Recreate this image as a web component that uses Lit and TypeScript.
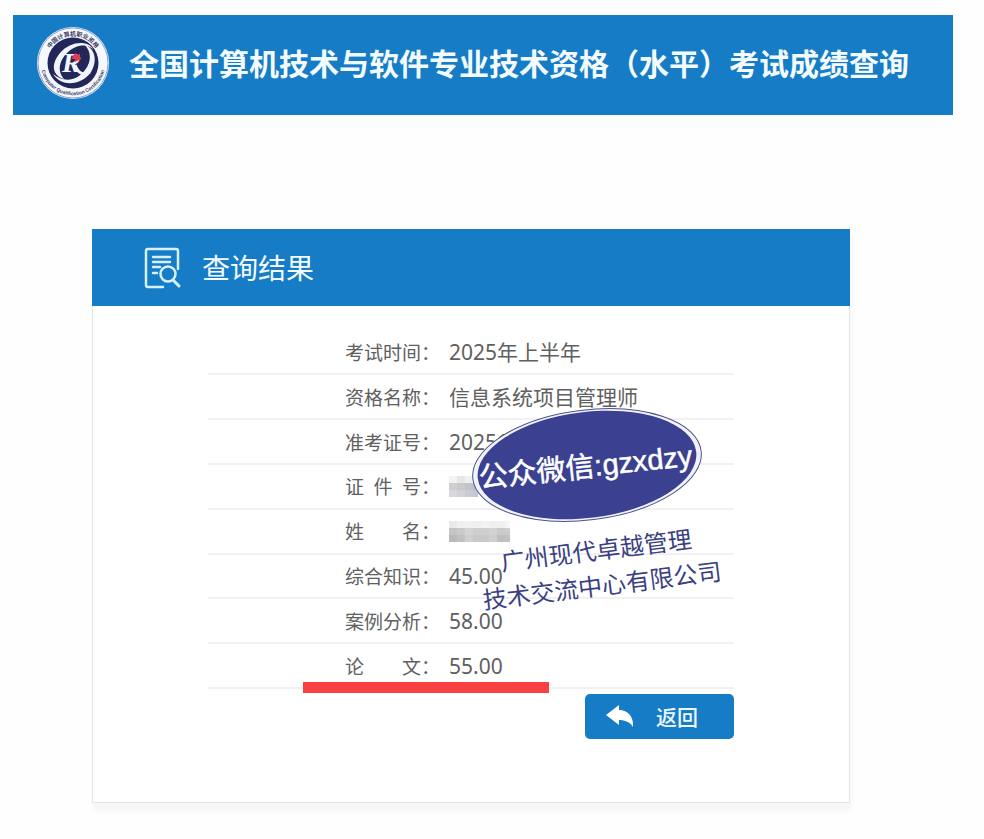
import { LitElement, html, svg, css } from "lit";
import { customElement } from "lit/decorators.js";

interface Row {
  label: string;
  value?: string;
  mosaic?: string[][];
}

const rows: Row[] = [
  { label: "考试时间", value: "2025年上半年" },
  { label: "资格名称", value: "信息系统项目管理师" },
  { label: "准考证号", value: "20251" },
  { label: "证 件 号", mosaic: [["#f3f3f3", "#e6e6e6", "#f0f0f0", "#dcdce0"], ["#cfcfcf", "#c9c9cb", "#c2c4ca", "#b9bcc8"], ["#d9d9dc", "#d2d3d9", "#c9cbd6", "#c3c6d4"]] },
  { label: "姓 名", mosaic: [["#e9e9e9", "#efefef", "#f1f1f1", "#efefef", "#f3f3f3", "#efefef", "#f0f0f0", "#f6f6f6"], ["#c4c4c4", "#cacaca", "#d4d4d4", "#cecece", "#cecece", "#d2d2d2", "#c9c9c9", "#cdcdcd"], ["#b9b9b9", "#c1c1c1", "#cfcfcf", "#c9c9c9", "#c9c9c9", "#cecece", "#bfbfbf", "#c1c1c1"]] },
  { label: "综合知识", value: "45.00" },
  { label: "案例分析", value: "58.00" },
  { label: "论 文", value: "55.00" },
];

const mosaic = (cells: string[][]) => html`
  <svg class="mosaic" width=${cells[0].length * 8 - 3} height="21" aria-label="已隐藏">
    ${cells.map((line, y) => line.map((fill, x) => svg`<rect x=${x * 8} y=${y * 7} width="8" height="7" fill=${fill}></rect>`))}
  </svg>`;

@customElement("site-logo")
export class SiteLogo extends LitElement {
  static styles = css`
    :host { display: block; flex: none; }
    svg { display: block; }
    .ring { font: 700 6px "Noto Sans CJK SC", sans-serif; fill: #3b3d63; }
    .latin { font: 700 5px "Liberation Sans", sans-serif; fill: #3b3d63; }
    .letter { font: italic 700 28px "Liberation Serif", serif; fill: #f4f5fb; }
  `;
  render() {
    return html`
      <svg width="72" height="72" viewBox="0 0 72 72" role="img" aria-label="计算机职业资格">
        <defs>
          <path id="upper" d="M9 36A27 27 0 0 1 63 36"></path>
          <path id="lower" d="M4 32A32.250 32.250 0 1 0 68 32"></path>
        </defs>
        <circle cx="36" cy="36" r="36" fill="#f5f8fe"></circle>
        <circle cx="36" cy="36" r="35" fill="none" stroke="#8fa0c4" stroke-width="1"></circle>
        <circle cx="36" cy="36" r="25.500" fill="#232659"></circle>
        <text class="ring"><textPath href="#upper" startOffset="50%" text-anchor="middle">中国计算机职业资格</textPath></text>
        <text class="latin"><textPath href="#lower" startOffset="50%" text-anchor="middle">Computer Qualification Certification</textPath></text>
        <path d="M56 22C51 13 33 14 23 26C13 38 16 49 27 52C20 44 22 34 30 26C38 18 49 16 56 22Z" fill="#f2f4fb"></path>
        <path d="M16 47C25 61 45 58 54 45C61 34 58 21 48 18C54 25 55 34 48 43C40 54 27 56 16 47Z" fill="#f2f4fb"></path>
        <text class="letter" x="25" y="45">R</text>
        <path d="M38 38C41 46 46 49 53 45" fill="none" stroke="#f2f4fb" stroke-width="3"></path>
        <path d="M35 32C35 29 37 27 39 26L39 28L43 27L43 30C45 31 44 33 42 33L38 35L38 32Z" fill="#e33a55"></path>
      </svg>`;
  }
}

@customElement("promo-stamp")
export class PromoStamp extends LitElement {
  static styles = css`
    :host { display: block; pointer-events: none; }
    svg { display: block; overflow: visible; }
    text { font-family: "Liberation Sans", "Noto Sans CJK SC", sans-serif; }
    .handle { font-size: 29px; fill: #fff; stroke: #fff; stroke-width: 0.5px; }
    .company { font-size: 24px; font-weight: 400; fill: #3b3f83; }
  `;
  render() {
    return html`
      <svg width="250" height="204" viewBox="0 0 250 204">
        <g transform="rotate(-7 115 57)">
          <ellipse cx="115" cy="57" rx="115" ry="55" fill="#f1f3fc" stroke="#4c5285" stroke-width="1"></ellipse>
          <ellipse cx="115" cy="57" rx="110" ry="53" fill="#3b4190"></ellipse>
        </g>
        <text class="handle" transform="translate(8 80) rotate(-6)">公众微信:gzxdzy</text>
        <text class="company" transform="translate(30 163) rotate(-7)">广州现代卓越管理</text>
        <text class="company" transform="translate(12 201) rotate(-7)">技术交流中心有限公司</text>
      </svg>`;
  }
}

@customElement("app-root")
export class AppRoot extends LitElement {
  static styles = css`
    :host {
      display: block;
      box-sizing: border-box;
      min-height: 100vh;
      padding: 15px 31px 28px 13px;
      background: #fefefe;
      color: #606060;
      font-family: "Noto Sans", "Noto Sans CJK SC", sans-serif;
    }
    h1, h2 { margin: 0; color: #f4fbff; }
    .banner {
      display: flex;
      align-items: center;
      gap: 20px;
      box-sizing: border-box;
      min-height: 100px;
      padding: 0 24px 4px;
      background: #167cc6;
    }
    h1 { padding-bottom: 2px; font: 700 30px/40px "Noto Sans CJK SC", sans-serif; white-space: nowrap; }
    .card {
      margin: 114px 103px 0 79px;
      background: #fff;
      border: 1px solid #e4e5e7;
      border-top: 0;
      box-shadow: 2px 8px 4px #f6f6f6;
    }
    .card-head {
      display: flex;
      align-items: center;
      gap: 20px;
      min-height: 77px;
      margin: 0 -1px;
      padding-left: 52px;
      background: #167cc6;
    }
    h2 { padding-bottom: 2px; font: 400 28px/40px "Noto Sans CJK SC", sans-serif; }
    .card-body {
      position: relative;
      display: flex;
      flex-direction: column;
      padding: 25px 115px 63px;
    }
    table { width: 100%; height: 358px; border-collapse: collapse; }
    th, td { padding: 0; border-bottom: 2px solid #f1f1f2; text-align: left; font-weight: 400; }
    th {
      width: 241px;
      box-sizing: border-box;
      padding-left: 137px;
      font: 400 19px/28px "Noto Sans CJK SC", sans-serif;
      white-space: nowrap;
    }
    .label { display: inline-block; width: 76px; text-align-last: justify; }
    td { font-size: 21px; line-height: 28px; white-space: nowrap; }
    .mosaic { display: block; }
    button {
      display: flex;
      align-items: center;
      align-self: flex-end;
      gap: 22px;
      width: 149px;
      height: 45px;
      margin-top: 5px;
      padding: 0 21px 2px;
      border: 0;
      border-radius: 5px;
      background: #167cc6;
      color: #eef8ff;
      font: 500 21px/28px "Noto Sans CJK SC", sans-serif;
    }
    .underline { position: absolute; left: 210px; top: 376px; width: 246px; height: 11px; background: #f94141; }
    promo-stamp { position: absolute; left: 379px; top: 102px; }
  `;

  render() {
    return html`
      <header class="banner">
        <site-logo></site-logo>
        <h1>全国计算机技术与软件专业技术资格（水平）考试成绩查询</h1>
      </header>
      <main class="card">
        <div class="card-head">
          <svg width="38" height="42" viewBox="0 0 38 42" fill="none" stroke="#d5f0ff" stroke-width="2.500" stroke-linecap="round" stroke-linejoin="round" aria-hidden="true">
            <path d="M19 40H4Q2 40 2 38V4Q2 2 4 2H32Q34 2 34 4V22"></path>
            <path d="M9 10H26M9 15H26M9 20H16M9 26H13"></path>
            <circle cx="24" cy="27" r="7.500"></circle>
            <path d="M29 33L35 39" stroke-width="3"></path>
          </svg>
          <h2>查询结果</h2>
        </div>
        <div class="card-body">
          <table>
            <tbody>
              ${rows.map((r) => html`
                <tr>
                  <th scope="row"><span class="label">${r.label}</span>：</th>
                  <td>${r.mosaic ? mosaic(r.mosaic) : r.value}</td>
                </tr>`)}
            </tbody>
          </table>
          <button type="button">
            <svg width="28" height="22" viewBox="0 0 28 22" fill="#fff" aria-hidden="true">
              <path d="M0 10L13 0V5C22 5 28 12 27 22C24 17 19 15 13 15V20Z"></path>
            </svg>
            返回
          </button>
          <div class="underline"></div>
          <promo-stamp></promo-stamp>
        </div>
      </main>`;
  }
}
